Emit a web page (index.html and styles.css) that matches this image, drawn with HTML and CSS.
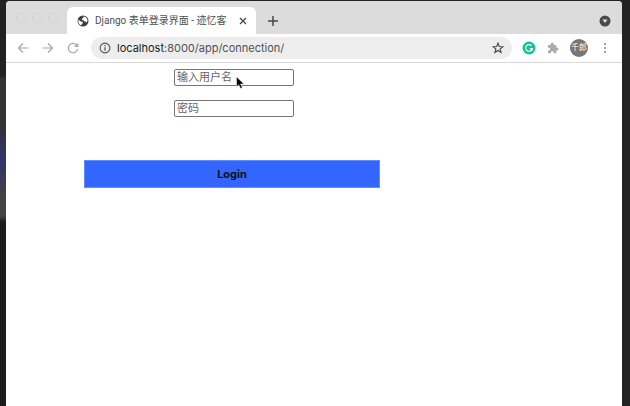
FILE: index.html
```
<!DOCTYPE html>
<html lang="zh">
<head>
    <meta charset="UTF-8">
    <meta name="viewport" content="width=device-width, initial-scale=1.0">
    <title>Django 表单登录界面 - 迹忆客</title>
    <link rel="stylesheet" href="styles.css">
</head>
<body>
    <div class="browser">
        <div class="tabstrip">
            <div class="lights">
                <span class="light"></span>
                <span class="light"></span>
                <span class="light"></span>
            </div>
            <div class="tab">
                <svg class="globe" width="12" height="12" viewBox="0 0 12 12">
                    <circle cx="6" cy="6" r="5.5" fill="#3c4043"/>
                    <path d="M1.3 4.5L3.6 6.4L5.6 6.8L5.8 8.2L4.6 9L4.4 10.6C2.3 10 .9 7.5 1.3 4.5ZM6.3 1.4L9 2.3L10.6 5L9.8 7.4L8.6 6.6L7.5 6.4L6.6 5.2L5 5L4.8 3.8L6.2 3.2Z" fill="#fff"/>
                </svg>
                <span class="tab-title">Django 表单登录界面 - 迹忆客</span>
                <button class="icon-btn" type="button" aria-label="Close tab">
                    <svg width="8" height="8" viewBox="0 0 8 8"><path d="M1 1L7 7M7 1L1 7" stroke="#45484b" stroke-width="1.3"/></svg>
                </button>
            </div>
            <button class="icon-btn new-tab" type="button" aria-label="New tab">
                <svg width="10" height="10" viewBox="0 0 10 10"><path d="M5 0V10M0 5H10" stroke="#45484b" stroke-width="1.5"/></svg>
            </button>
            <button class="icon-btn tab-search" type="button" aria-label="Search tabs">
                <svg width="12" height="12" viewBox="0 0 12 12"><circle cx="6" cy="6" r="5.5" fill="#4a4a4a"/><path d="M3.5 4.5H8.5L6 8Z" fill="#e4e4e4"/></svg>
            </button>
        </div>

        <div class="toolbar">
            <div class="nav">
                <button class="icon-btn" type="button" aria-label="Back">
                    <svg width="12" height="12" viewBox="0 0 12 12"><path d="M11.5 6H1.5M6 1.5L1.5 6L6 10.5" fill="none" stroke="#a3a5a7" stroke-width="1.2"/></svg>
                </button>
                <button class="icon-btn" type="button" aria-label="Forward">
                    <svg width="12" height="12" viewBox="0 0 12 12"><path d="M.5 6H10.5M6 1.5L10.5 6L6 10.5" fill="none" stroke="#a3a5a7" stroke-width="1.2"/></svg>
                </button>
                <button class="icon-btn" type="button" aria-label="Reload">
                    <svg width="12" height="12" viewBox="0 0 12 12"><path d="M10 3.5A4.7 4.7 0 1 0 10.6 7.2" fill="none" stroke="#a3a5a7" stroke-width="1.2"/><path d="M11.2 .8V5H7Z" fill="#a3a5a7"/></svg>
                </button>
            </div>
            <div class="address">
                <svg width="12" height="12" viewBox="0 0 12 12"><circle cx="6" cy="6" r="4.9" fill="none" stroke="#505356" stroke-width="1.1"/><path d="M6 5.2V8.8M6 3.1V4.3" stroke="#505356" stroke-width="1.2"/></svg>
                <div class="url"><span class="host">localhost</span>:8000/app/connection/</div>
                <button class="icon-btn" type="button" aria-label="Bookmark">
                    <svg width="12" height="12" viewBox="0 0 12 12"><path d="M6 1.2L7.3 4.5L10.9 4.7L8.1 7L9.1 10.5L6 8.5L2.9 10.5L3.9 7L1.1 4.7L4.7 4.5Z" fill="none" stroke="#45484b" stroke-width="1.1"/></svg>
                </button>
            </div>
            <div class="extensions">
                <svg width="14" height="14" viewBox="0 0 14 14"><circle cx="7" cy="7" r="6.5" fill="#15c39a"/><path d="M9.4 4.7A3.3 3.3 0 1 0 10.2 7.6H7.8M10.2 7.6V9.8" fill="none" stroke="#fff" stroke-width="1.2"/></svg>
                <svg width="12" height="12" viewBox="0 0 12 12"><path d="M1 3H3.7V2A1.5 1.5 0 0 1 6.7 2V3H9.3V5.5H10A1.5 1.5 0 0 1 10 8.5H9.3V11.3H6.7V10.6A1.4 1.4 0 0 0 3.9 10.6V11.3H1V8.5H1.7A1.4 1.4 0 0 0 1.7 5.7H1Z" fill="#aaacae"/></svg>
                <span class="avatar">千郎</span>
            </div>
            <button class="icon-btn" type="button" aria-label="Menu">
                <svg width="4" height="12" viewBox="0 0 4 12"><circle cx="2" cy="2" r="1" fill="#808386"/><circle cx="2" cy="6" r="1" fill="#808386"/><circle cx="2" cy="10" r="1" fill="#808386"/></svg>
            </button>
        </div>

        <div class="page">
            <form class="login-form">
                <input class="field" type="text" name="username" placeholder="输入用户名" aria-label="输入用户名">
                <input class="field" type="password" name="password" placeholder="密码" aria-label="密码">
                <button class="login-btn" type="button">Login</button>
            </form>
        </div>
    </div>

    <svg class="cursor" width="9" height="14" viewBox="0 0 9 14"><path d="M.5 .8V10.8L2.8 8.7L4.5 12.6L6.3 11.8L4.6 8H7.9Z" fill="#000" stroke="#fff" stroke-width=".5"/></svg>
</body>
</html>
```
FILE: styles.css
```
* {
    box-sizing: border-box;
}

body {
    margin: 0;
    min-height: 100vh;
    display: flex;
    padding: 1px 8px 0 6px;
    background: linear-gradient(#222 0, #222 76px, #333 78px, #333 120px, #33336a 160px, #444 200px, #444 216px, #1c1c20 222px) left / 6px 100% no-repeat, #232323;
    font-family: Roboto, "Noto Sans CJK SC", sans-serif;
}

.browser {
    flex: 1;
    display: flex;
    flex-direction: column;
    background: #fff;
    border-radius: 4px 4px 0 0;
    overflow: hidden;
}

.icon-btn {
    display: flex;
    padding: 0;
    border: 0;
    background: none;
}

/* tabs */
.tabstrip {
    display: flex;
    align-items: center;
    height: 33px;
    padding-right: 11px;
    background: #dcdcdc;
}

.lights {
    display: flex;
    gap: 6px;
    width: 61px;
    padding-left: 10px;
}

.light {
    width: 10px;
    height: 10px;
    border: 1px dotted #cacaca;
    border-radius: 50%;
}

.tab {
    display: flex;
    align-items: center;
    align-self: flex-end;
    gap: 6px;
    width: 189px;
    height: 27px;
    padding: 0 9px 0 10px;
    background: #fff;
    border-radius: 6px 6px 0 0;
}

.tab-title {
    flex: 1;
    font-size: 10px;
    line-height: 14px;
    color: #4c4f52;
    white-space: nowrap;
}

.new-tab {
    margin: 6px 0 0 12px;
}

.tab-search {
    margin: 6px 0 0 auto;
}

/* toolbar */
.toolbar {
    display: flex;
    align-items: center;
    height: 29px;
    padding: 0 15px 0 11px;
    border-bottom: 1px solid #d8d8d8;
}

.nav {
    display: flex;
    gap: 13px;
    margin-right: 12px;
}

.address {
    flex: 1;
    display: flex;
    align-items: center;
    gap: 6px;
    height: 22px;
    padding: 0 8px;
    background: #ededed;
    border-radius: 11px;
}

.url {
    flex: 1;
    font-family: Inter, sans-serif;
    font-size: 11px;
    line-height: 16px;
    color: #505356;
}

.host {
    color: #202124;
}

.extensions {
    display: flex;
    align-items: center;
    gap: 11px;
    margin: 0 15px 0 10px;
}

.avatar {
    width: 18px;
    height: 18px;
    border-radius: 50%;
    background: #757575;
    color: #fff;
    font-size: 8px;
    line-height: 18px;
    text-align: center;
}

/* login page */
.page {
    flex: 1;
    padding: 6px 78px;
}

.login-form {
    display: flex;
    flex-direction: column;
    align-items: flex-start;
    gap: 14px;
    max-width: 296px;
}

.field {
    width: 120px;
    height: 17px;
    margin-left: 90px;
    padding: 0 2px;
    border: 1px solid #767676;
    border-radius: 2px;
    background: #fff;
    font-family: Roboto, "Noto Sans CJK SC", sans-serif;
    font-size: 11px;
}

.field::placeholder {
    color: #666;
}

.login-btn {
    width: 100%;
    height: 28px;
    margin-top: 29px;
    padding: 0;
    border: 1px solid #5b8fff;
    background: #3366ff;
    color: #111;
    font-family: Inter, sans-serif;
    font-size: 11px;
    font-weight: 700;
}

/* mouse pointer over the page */
.cursor {
    position: absolute;
    left: 236px;
    top: 76px;
}
```
